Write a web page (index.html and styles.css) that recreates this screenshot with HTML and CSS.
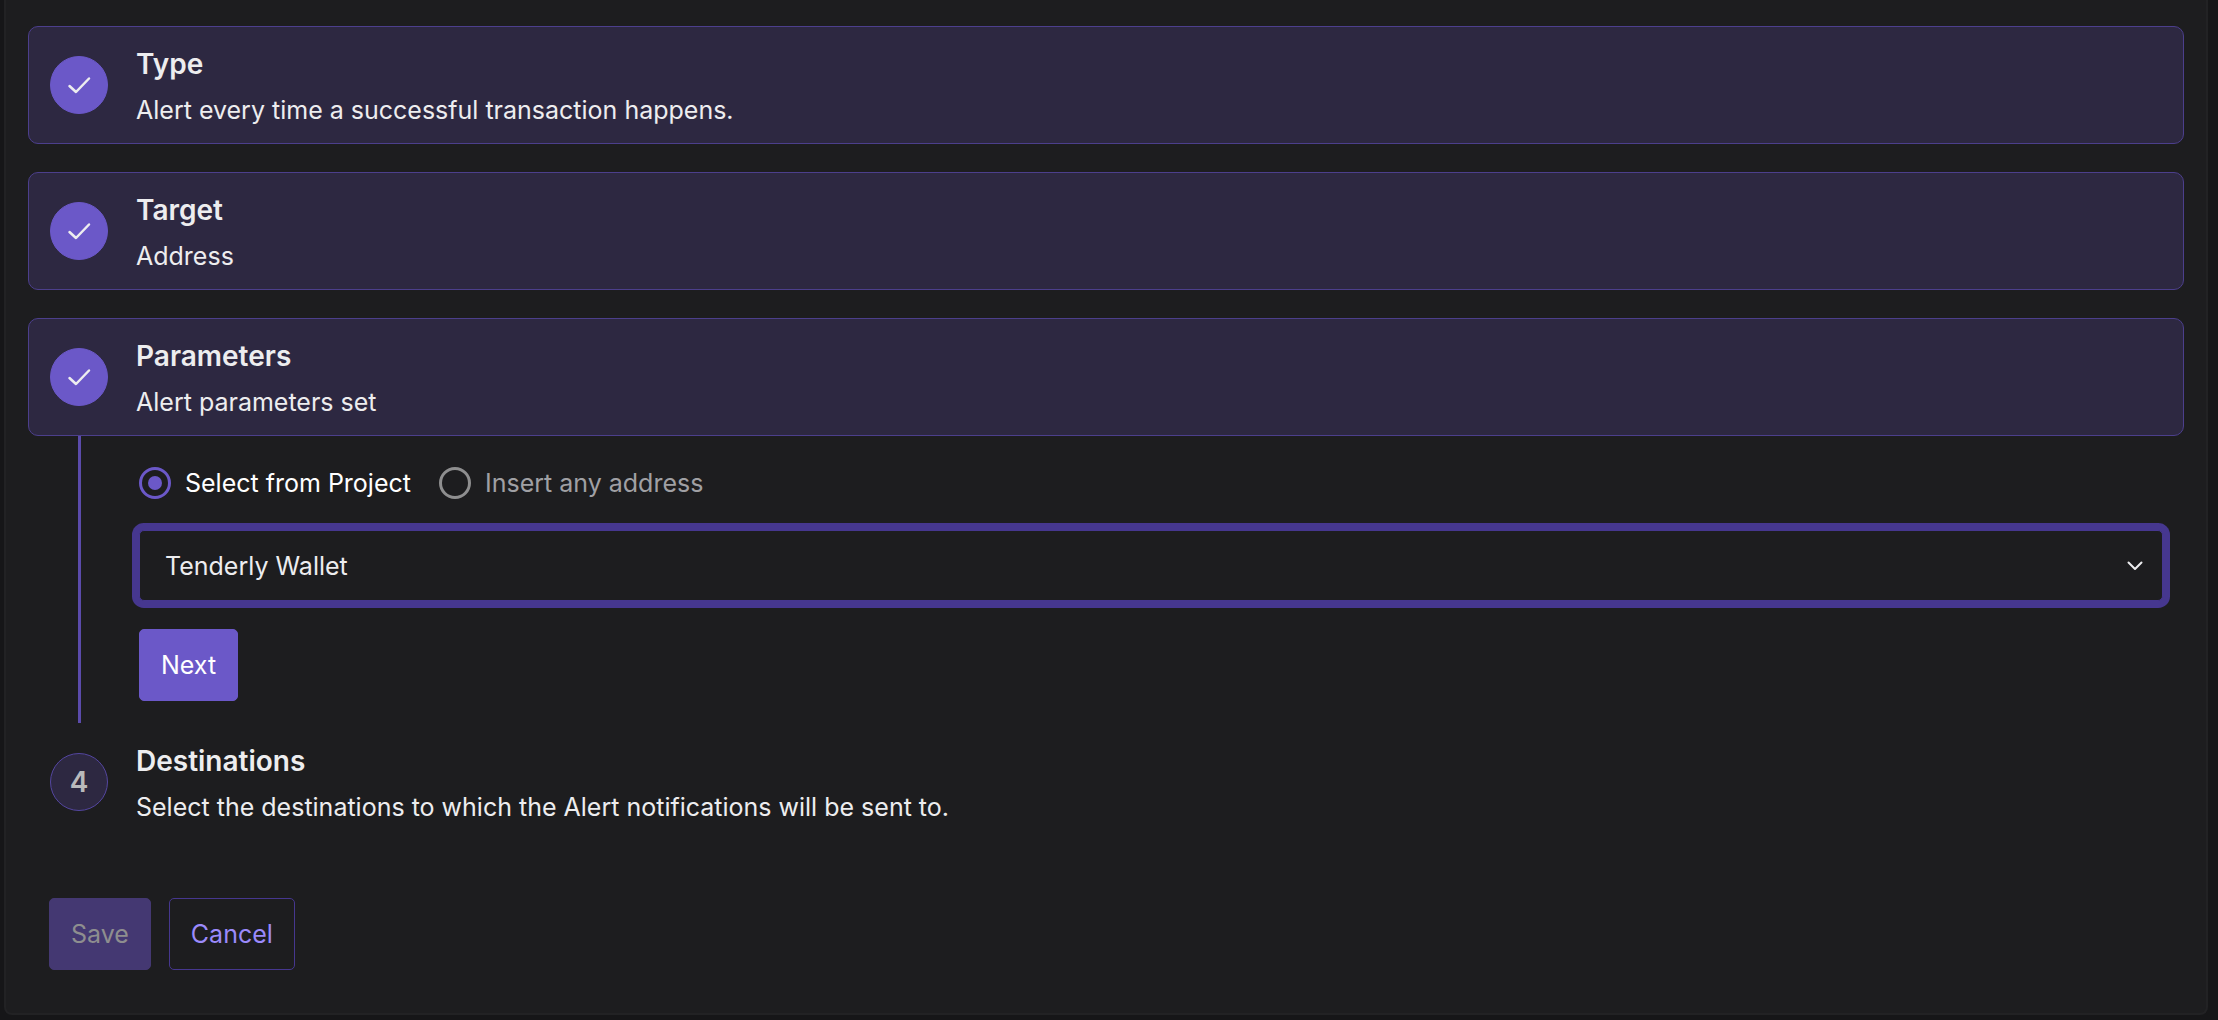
FILE: index.html
```html
<!DOCTYPE html>
<html lang="en">
<head>
    <meta charset="UTF-8">
    <meta name="viewport" content="width=device-width, initial-scale=1.0">
    <title>New Alert</title>
    <link rel="stylesheet" href="styles.css">
</head>
<body>
    <form class="alert-panel">
        <!-- Completed steps -->
        <section class="step completed">
            <div class="step-badge">
                <svg class="check-icon" viewBox="0 0 24 24" aria-hidden="true"><path d="M2.500 13l6.500 6L22 5.500"/></svg>
            </div>
            <div class="step-text">
                <h2>Type</h2>
                <p>Alert every time a successful transaction happens.</p>
            </div>
        </section>

        <section class="step completed">
            <div class="step-badge">
                <svg class="check-icon" viewBox="0 0 24 24" aria-hidden="true"><path d="M2.500 13l6.500 6L22 5.500"/></svg>
            </div>
            <div class="step-text">
                <h2>Target</h2>
                <p>Address</p>
            </div>
        </section>

        <section class="step completed active">
            <div class="step-badge">
                <svg class="check-icon" viewBox="0 0 24 24" aria-hidden="true"><path d="M2.500 13l6.500 6L22 5.500"/></svg>
            </div>
            <div class="step-text">
                <h2>Parameters</h2>
                <p>Alert parameters set</p>
            </div>
        </section>

        <!-- Parameters body -->
        <div class="step-content">
            <div class="radio-group">
                <label class="radio" for="fromProject">
                    <input type="radio" id="fromProject" name="source" value="project" checked>
                    <span>Select from Project</span>
                </label>
                <label class="radio" for="anyAddress">
                    <input type="radio" id="anyAddress" name="source" value="address">
                    <span>Insert any address</span>
                </label>
            </div>

            <div class="select-box">
                <select id="wallet" name="wallet" aria-label="Project wallet">
                    <option>Tenderly Wallet</option>
                </select>
                <svg class="chevron-icon" viewBox="0 0 16 10" aria-hidden="true"><path d="M1.500 1.500L8 8l6.500-6.500"/></svg>
            </div>

            <button type="button" class="btn btn-primary">Next</button>
        </div>

        <section class="step">
            <div class="step-badge">4</div>
            <div class="step-text">
                <h2>Destinations</h2>
                <p>Select the destinations to which the Alert notifications will be sent to.</p>
            </div>
        </section>

        <div class="form-actions">
            <button type="submit" class="btn btn-primary" disabled>Save</button>
            <button type="button" class="btn btn-outline">Cancel</button>
        </div>
    </form>
</body>
</html>
```
FILE: styles.css
```css
* {
    margin: 0;
    padding: 0;
    box-sizing: border-box;
}

body {
    background: #161618;
    color: #ededef;
    font-family: Inter, sans-serif;
    font-size: 25px;
    line-height: 32px;
    padding: 0 10px 4px 4px;
}

.alert-panel {
    background: #1d1d1f;
    border: 2px solid #222224;
    border-top: none;
    border-radius: 0 0 8px 8px;
    padding: 26px 22px 43px;
}

/* Steps */
.step {
    display: flex;
    align-items: center;
    gap: 28px;
    min-height: 118px;
    padding: 16px 21px;
    border: 1px solid transparent;
    border-radius: 10px;
    margin-bottom: 28px;
}

.step.completed {
    background: #2d2841;
    border-color: #4c3f8c;
}

.step.active {
    margin-bottom: 0;
}

.step-badge {
    display: flex;
    align-items: center;
    justify-content: center;
    flex-shrink: 0;
    width: 58px;
    height: 58px;
    border: 1px solid #5446a0;
    border-radius: 50%;
    background: #2d2841;
    color: #b9b9bb;
    font-size: 28px;
    font-weight: 600;
}

.completed .step-badge {
    background: #6b58c8;
    border-color: #6b58c8;
}

.check-icon {
    width: 24px;
    height: 24px;
    fill: none;
    stroke: #ededef;
    stroke-width: 2.500;
    stroke-linecap: round;
    stroke-linejoin: round;
}

.step-text {
    padding-top: 2px;
}

.step-text h2 {
    font-size: 28px;
    font-weight: 600;
    line-height: 36px;
    margin-bottom: 12px;
}

/* Content of the open step, joined to the next one by a line */
.step-content {
    display: flex;
    flex-direction: column;
    align-items: flex-start;
    gap: 28px;
    margin-left: 50px;
    padding: 31px 21px 22px 58px;
    border-left: 3px solid #5b4bab;
}

.radio-group {
    display: flex;
    gap: 28px;
    margin-bottom: 3px;
}

.radio {
    display: flex;
    align-items: center;
    gap: 14px;
    color: #a0a0a4;
    cursor: pointer;
}

.radio:has(input:checked) {
    color: #ffffff;
}

.radio input {
    appearance: none;
    display: grid;
    place-items: center;
    width: 32px;
    height: 32px;
    border: 3px solid #8e8e8f;
    border-radius: 50%;
}

.radio input:checked {
    border-color: #6b58c8;
}

.radio input:checked::before {
    content: "";
    width: 14px;
    height: 14px;
    border-radius: 50%;
    background: #6b58c8;
}

.select-box {
    display: grid;
    align-items: center;
    width: 100%;
}

.select-box select,
.chevron-icon {
    grid-area: 1 / 1;
}

.select-box select {
    appearance: none;
    width: 100%;
    height: 71px;
    padding: 0 25px;
    border: 1px solid #46378f;
    border-radius: 5px;
    box-shadow: 0 0 0 7px #46378f;
    outline: none;
    background: #1d1d1f;
    color: inherit;
    font: inherit;
}

.chevron-icon {
    justify-self: end;
    width: 16px;
    height: 10px;
    margin-right: 20px;
    fill: none;
    stroke: #ededef;
    stroke-width: 2;
    stroke-linecap: round;
    stroke-linejoin: round;
    pointer-events: none;
}

/* Buttons */
.btn {
    height: 72px;
    padding: 0 21px;
    border: 1px solid transparent;
    border-radius: 5px;
    font: inherit;
    cursor: pointer;
}

.btn-primary {
    background: #6b58c8;
    border-color: #6b58c8;
    color: #ffffff;
}

.btn-primary:disabled {
    background: #443872;
    border-color: #443872;
    color: #8e8e8f;
    cursor: not-allowed;
}

.btn-outline {
    background: transparent;
    border-color: #46378f;
    color: #9b8afb;
}

.form-actions {
    display: flex;
    gap: 18px;
    margin-top: 57px;
    padding-left: 21px;
}
```
